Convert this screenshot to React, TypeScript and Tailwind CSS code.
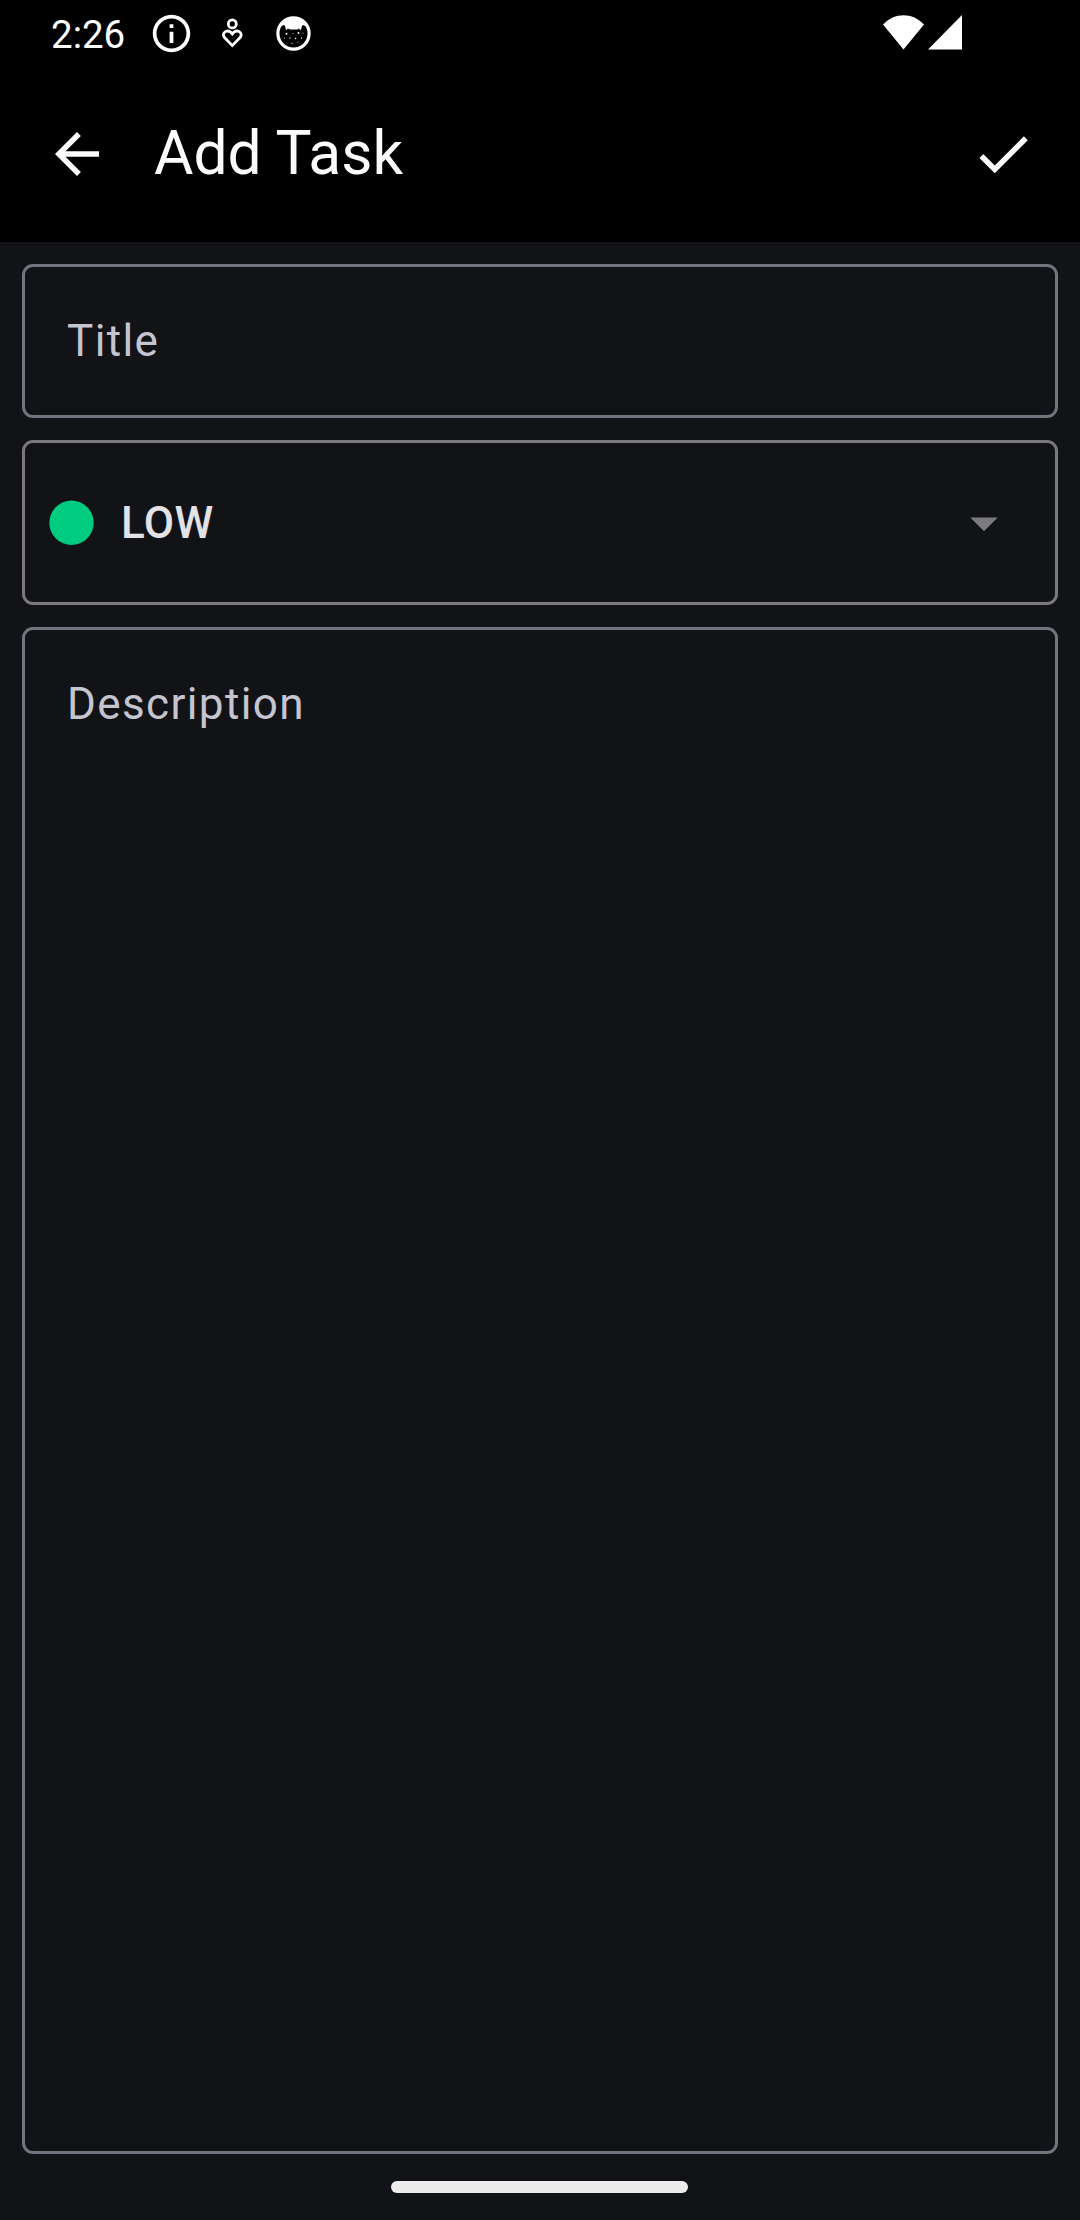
function StatusBar() {
  return (
    <div className="flex h-[66px] items-start pl-[51px] text-white">
      <span className="mt-[12px] w-[75px] text-[38.5px] leading-[45px]">2:26</span>
      <svg className="mt-[11px] ml-[23px] size-[45px]" viewBox="0 0 24 24" fill="currentColor">
        <path d="M11 7h2v2h-2zm0 4h2v6h-2zm1-9C6.48 2 2 6.48 2 12s4.480 10 10 10 10-4.480 10-10S17.520 2 12 2zm0 18c-4.410 0-8-3.590-8-8s3.590-8 8-8 8 3.590 8 8-3.590 8-8 8z" />
      </svg>
      <svg className="mt-[16px] ml-[25px] h-[34px] w-[26px]" viewBox="0 0 26 34" fill="none" stroke="currentColor" strokeWidth="2.800">
        <circle cx="13.300" cy="7.900" r="4" />
        <path d="M13.300 29.600 5.300 21.300c-3.300-4.500 3.500-9.500 8-3.400 4.500-6.100 11.300-1.100 8 3.400z" />
      </svg>
      <svg className="mt-[16px] ml-[31px] size-[35px]" viewBox="0 0 35 35">
        <circle cx="17.500" cy="17.500" r="15.600" fill="#000" stroke="#fff" strokeWidth="3.200" />
        <path d="M4.500 10.500C8 0 27 0 30.500 10.500L27 9 26 10 24.800 14.200 22.800 12.600 21.500 13.600H14L12 12.600 10 14.200 9 10 8 9z" fill="#fff" />
        <g fill="#fff">
          <circle cx="10.500" cy="17.700" r="1" />
          <circle cx="22.500" cy="17" r="1" />
          <circle cx="17" cy="17.500" r=".5" />
          <circle cx="14" cy="22" r=".7" />
          <circle cx="19.500" cy="22.500" r=".8" />
          <circle cx="25.500" cy="22" r=".7" />
          <circle cx="8.500" cy="22" r=".5" />
          <circle cx="16" cy="27.500" r=".6" />
          <circle cx="22" cy="26" r=".5" />
          <circle cx="27" cy="17" r=".5" />
        </g>
      </svg>
      <svg className="mt-[15px] ml-auto h-[35px] w-[41px]" viewBox="0 0 41 35" fill="currentColor">
        <path d="M0 9.500C11.500-3 29.500-3 41 9.500L20.500 34.500z" />
      </svg>
      <svg className="mt-[15px] mr-[118px] ml-[4px] h-[35px] w-[34px]" viewBox="0 0 34 35" fill="currentColor">
        <path d="M0 34.500 34 0V34.500z" />
      </svg>
    </div>
  );
}

function AppBar() {
  return (
    <div className="flex h-[176px] items-center px-[44px] text-[#fcfcfc]">
      <svg className="size-[66px]" viewBox="0 0 24 24" fill="currentColor">
        <path d="M20 11H7.830l5.590-5.590L12 4l-8 8 8 8 1.410-1.410L7.830 13H20v-2z" />
      </svg>
      <h1 className="mb-[2px] ml-[44px] text-[60.5px] leading-[77px] font-normal">Add Task</h1>
      <svg className="ml-auto size-[66px]" viewBox="0 0 24 24" fill="currentColor">
        <path d="M9 16.170 4.830 12l-1.420 1.410L9 19 21 7l-1.410-1.410z" />
      </svg>
    </div>
  );
}

export default function App() {
  return (
    <div className="flex h-[2220px] w-[1080px] flex-col bg-[#121317] font-[Roboto,sans-serif]">
      <header className="bg-black">
        <StatusBar />
        <AppBar />
      </header>
      <main className="flex flex-1 flex-col gap-[22px] px-[22px] pt-[22px]">
        <div className="flex h-[154px] items-center rounded-[11px] border-[3px] border-[#74747e] px-[42px] text-[44px] leading-[66px] tracking-[1.375px] text-[#c5c5d0]">
          Title
        </div>
        <div className="flex h-[165px] items-center rounded-[11px] border-[3px] border-[#7a797e] pr-[38px] pl-[24px]">
          <svg className="size-[45px] text-[#00cc80]" viewBox="0 0 45 45" fill="currentColor">
            <circle cx="22.500" cy="22.800" r="22.200" />
          </svg>
          <span className="ml-[27px] text-[44px] leading-[66px] font-medium tracking-[0.4125px] text-[#e3e2e7]">LOW</span>
          <svg className="ml-auto size-[66px] text-[#7c7b80]" viewBox="0 0 24 24" fill="currentColor">
            <path d="m7 10 5 5 5-5z" />
          </svg>
        </div>
        <div className="h-[1527px] rounded-[11px] border-[3px] border-[#74747e] px-[42px] pt-[41px] text-[44px] leading-[66px] tracking-[1.375px] text-[#c5c5d0]">
          Description
        </div>
      </main>
      <div className="flex h-[39px] justify-center">
        <div className="mr-[1px] h-[12px] w-[297px] rounded-full bg-[#ececec]" />
      </div>
    </div>
  );
}
